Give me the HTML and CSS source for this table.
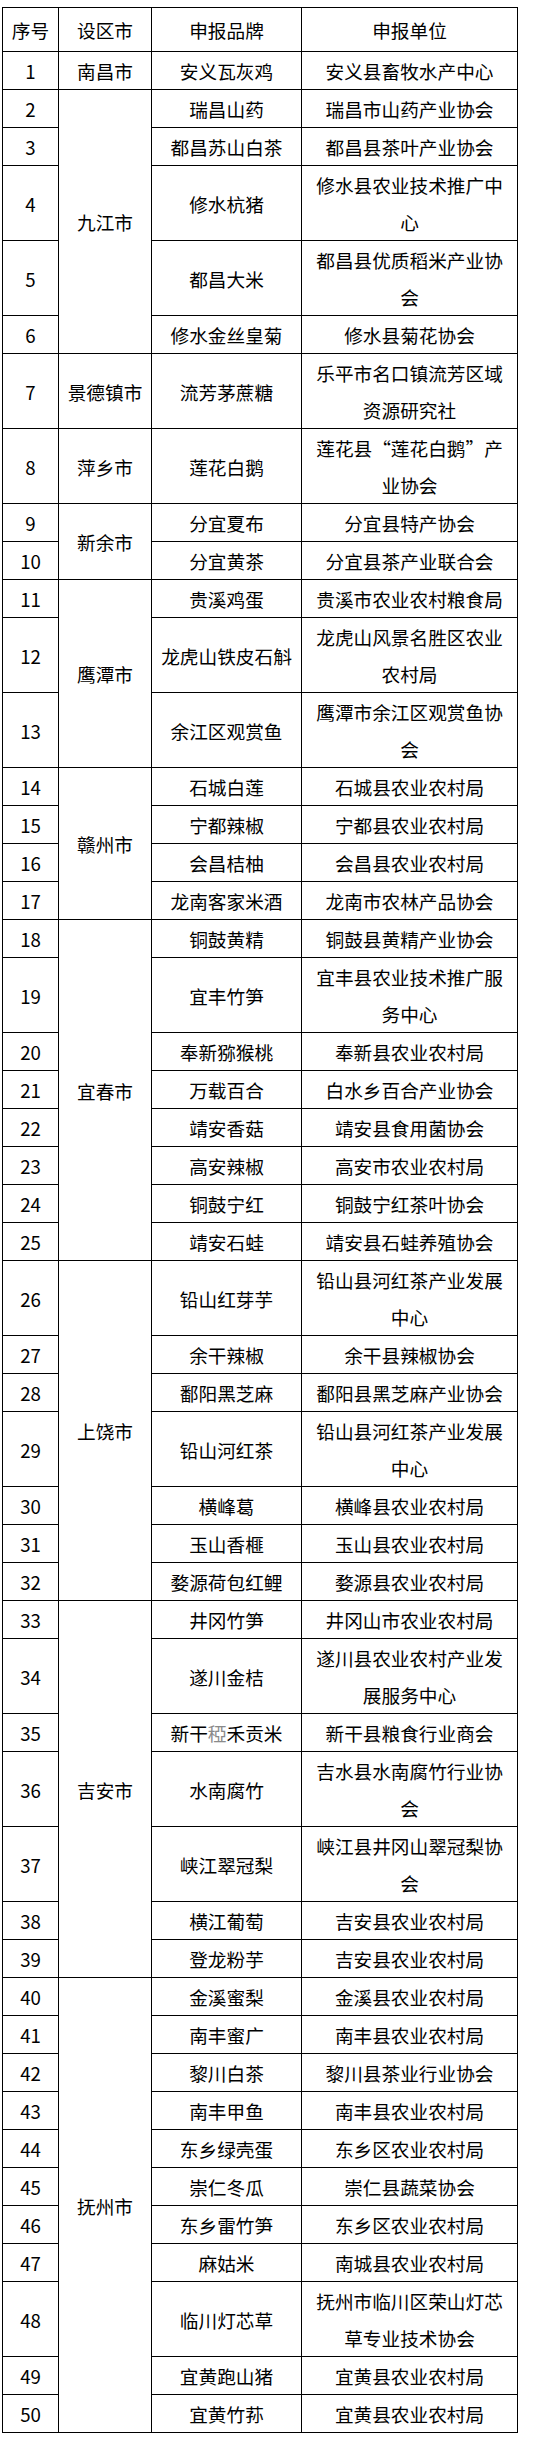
FILE: index.html
```html
<!DOCTYPE html>
<html lang="zh-CN">
<head>
<meta charset="utf-8">
<title>申报品牌</title>
<link rel="stylesheet" href="styles.css">
</head>
<body>
<table class="brands">
<colgroup>
<col class="c-no"><col class="c-city"><col class="c-brand"><col class="c-unit">
</colgroup>
<thead>
<tr><th>序号</th><th>设区市</th><th>申报品牌</th><th>申报单位</th></tr>
</thead>
<tbody>
<tr><td>1</td><td>南昌市</td><td>安义瓦灰鸡</td><td>安义县畜牧水产中心</td></tr>
<tr><td>2</td><td rowspan="5">九江市</td><td>瑞昌山药</td><td>瑞昌市山药产业协会</td></tr>
<tr><td>3</td><td>都昌苏山白茶</td><td>都昌县茶叶产业协会</td></tr>
<tr><td>4</td><td>修水杭猪</td><td>修水县农业技术推广中<br>心</td></tr>
<tr><td>5</td><td>都昌大米</td><td>都昌县优质稻米产业协<br>会</td></tr>
<tr><td>6</td><td>修水金丝皇菊</td><td>修水县菊花协会</td></tr>
<tr><td>7</td><td>景德镇市</td><td>流芳茅蔗糖</td><td>乐平市名口镇流芳区域<br>资源研究社</td></tr>
<tr><td>8</td><td>萍乡市</td><td>莲花白鹅</td><td>莲花县“莲花白鹅”产<br>业协会</td></tr>
<tr><td>9</td><td rowspan="2">新余市</td><td>分宜夏布</td><td>分宜县特产协会</td></tr>
<tr><td>10</td><td>分宜黄茶</td><td>分宜县茶产业联合会</td></tr>
<tr><td>11</td><td rowspan="3">鹰潭市</td><td>贵溪鸡蛋</td><td>贵溪市农业农村粮食局</td></tr>
<tr><td>12</td><td>龙虎山铁皮石斛</td><td>龙虎山风景名胜区农业<br>农村局</td></tr>
<tr><td>13</td><td>余江区观赏鱼</td><td>鹰潭市余江区观赏鱼协<br>会</td></tr>
<tr><td>14</td><td rowspan="4">赣州市</td><td>石城白莲</td><td>石城县农业农村局</td></tr>
<tr><td>15</td><td>宁都辣椒</td><td>宁都县农业农村局</td></tr>
<tr><td>16</td><td>会昌桔柚</td><td>会昌县农业农村局</td></tr>
<tr><td>17</td><td>龙南客家米酒</td><td>龙南市农林产品协会</td></tr>
<tr><td>18</td><td rowspan="8">宜春市</td><td>铜鼓黄精</td><td>铜鼓县黄精产业协会</td></tr>
<tr><td>19</td><td>宜丰竹笋</td><td>宜丰县农业技术推广服<br>务中心</td></tr>
<tr><td>20</td><td>奉新猕猴桃</td><td>奉新县农业农村局</td></tr>
<tr><td>21</td><td>万载百合</td><td>白水乡百合产业协会</td></tr>
<tr><td>22</td><td>靖安香菇</td><td>靖安县食用菌协会</td></tr>
<tr><td>23</td><td>高安辣椒</td><td>高安市农业农村局</td></tr>
<tr><td>24</td><td>铜鼓宁红</td><td>铜鼓宁红茶叶协会</td></tr>
<tr><td>25</td><td>靖安石蛙</td><td>靖安县石蛙养殖协会</td></tr>
<tr><td>26</td><td rowspan="7">上饶市</td><td>铅山红芽芋</td><td>铅山县河红茶产业发展<br>中心</td></tr>
<tr><td>27</td><td>余干辣椒</td><td>余干县辣椒协会</td></tr>
<tr><td>28</td><td>鄱阳黑芝麻</td><td>鄱阳县黑芝麻产业协会</td></tr>
<tr><td>29</td><td>铅山河红茶</td><td>铅山县河红茶产业发展<br>中心</td></tr>
<tr><td>30</td><td>横峰葛</td><td>横峰县农业农村局</td></tr>
<tr><td>31</td><td>玉山香榧</td><td>玉山县农业农村局</td></tr>
<tr><td>32</td><td>婺源荷包红鲤</td><td>婺源县农业农村局</td></tr>
<tr><td>33</td><td rowspan="7">吉安市</td><td>井冈竹笋</td><td>井冈山市农业农村局</td></tr>
<tr><td>34</td><td>遂川金桔</td><td>遂川县农业农村产业发<br>展服务中心</td></tr>
<tr><td>35</td><td>新干<span class="faint">稏</span>禾贡米</td><td>新干县粮食行业商会</td></tr>
<tr><td>36</td><td>水南腐竹</td><td>吉水县水南腐竹行业协<br>会</td></tr>
<tr><td>37</td><td>峡江翠冠梨</td><td>峡江县井冈山翠冠梨协<br>会</td></tr>
<tr><td>38</td><td>横江葡萄</td><td>吉安县农业农村局</td></tr>
<tr><td>39</td><td>登龙粉芋</td><td>吉安县农业农村局</td></tr>
<tr><td>40</td><td rowspan="11">抚州市</td><td>金溪蜜梨</td><td>金溪县农业农村局</td></tr>
<tr><td>41</td><td>南丰蜜广</td><td>南丰县农业农村局</td></tr>
<tr><td>42</td><td>黎川白茶</td><td>黎川县茶业行业协会</td></tr>
<tr><td>43</td><td>南丰甲鱼</td><td>南丰县农业农村局</td></tr>
<tr><td>44</td><td>东乡绿壳蛋</td><td>东乡区农业农村局</td></tr>
<tr><td>45</td><td>崇仁冬瓜</td><td>崇仁县蔬菜协会</td></tr>
<tr><td>46</td><td>东乡雷竹笋</td><td>东乡区农业农村局</td></tr>
<tr><td>47</td><td>麻姑米</td><td>南城县农业农村局</td></tr>
<tr><td>48</td><td>临川灯芯草</td><td>抚州市临川区荣山灯芯<br>草专业技术协会</td></tr>
<tr><td>49</td><td>宜黄跑山猪</td><td>宜黄县农业农村局</td></tr>
<tr><td>50</td><td>宜黄竹荪</td><td>宜黄县农业农村局</td></tr>
</tbody>
</table>
</body>
</html>
```

FILE: styles.css
```css
html, body {
  margin: 0;
  padding: 0;
  background: #ffffff;
}

body {
  padding: 7px 0 0 2px;
  font-family: "Noto Sans CJK SC", "Noto Sans", sans-serif;
  font-size: 18.67px;
  color: #000000;
}

.brands {
  border-collapse: collapse;
  table-layout: fixed;
  width: 516px;
}

.c-no { width: 56px; }
.c-city { width: 93px; }
.c-brand { width: 150px; }
.c-unit { width: 216px; }

.brands th,
.brands td {
  border: 1px solid #000000;
  padding: 0 4px;
  text-align: center;
  vertical-align: middle;
  line-height: 37px;
  font-weight: normal;
  white-space: nowrap;
}

.brands th {
  line-height: 43px;
}

.faint {
  color: #8a8a8a;
}
```
